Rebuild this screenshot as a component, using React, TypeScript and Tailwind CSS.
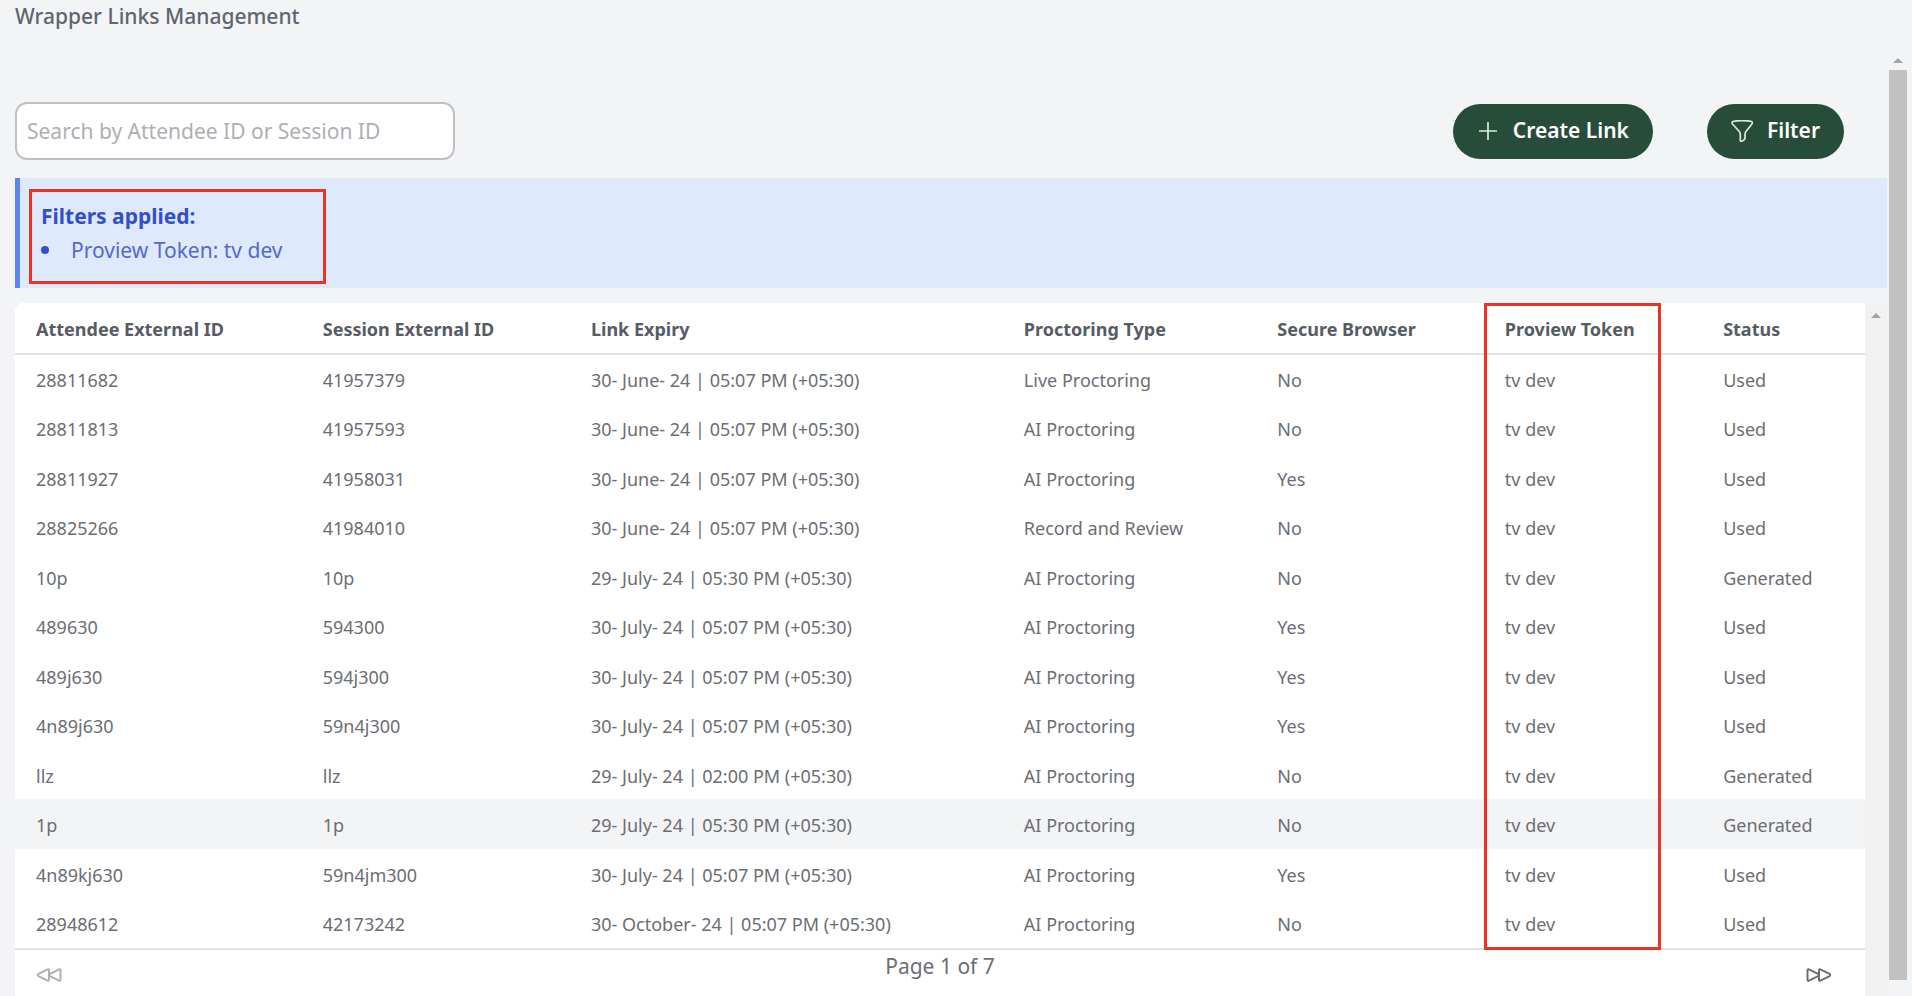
import type { ReactNode } from "react";

type Link = {
  attendee: string;
  session: string;
  expiry: string;
  type: string;
  secure: string;
  token: string;
  status: string;
};

const JUNE = "30- June- 24 | 05:07 PM (+05:30)";
const JULY = "30- July- 24 | 05:07 PM (+05:30)";

const LINKS: Link[] = [
  { attendee: "28811682", session: "41957379", expiry: JUNE, type: "Live Proctoring", secure: "No", token: "tv dev", status: "Used" },
  { attendee: "28811813", session: "41957593", expiry: JUNE, type: "AI Proctoring", secure: "No", token: "tv dev", status: "Used" },
  { attendee: "28811927", session: "41958031", expiry: JUNE, type: "AI Proctoring", secure: "Yes", token: "tv dev", status: "Used" },
  { attendee: "28825266", session: "41984010", expiry: JUNE, type: "Record and Review", secure: "No", token: "tv dev", status: "Used" },
  { attendee: "10p", session: "10p", expiry: "29- July- 24 | 05:30 PM (+05:30)", type: "AI Proctoring", secure: "No", token: "tv dev", status: "Generated" },
  { attendee: "489630", session: "594300", expiry: JULY, type: "AI Proctoring", secure: "Yes", token: "tv dev", status: "Used" },
  { attendee: "489j630", session: "594j300", expiry: JULY, type: "AI Proctoring", secure: "Yes", token: "tv dev", status: "Used" },
  { attendee: "4n89j630", session: "59n4j300", expiry: JULY, type: "AI Proctoring", secure: "Yes", token: "tv dev", status: "Used" },
  { attendee: "llz", session: "llz", expiry: "29- July- 24 | 02:00 PM (+05:30)", type: "AI Proctoring", secure: "No", token: "tv dev", status: "Generated" },
  { attendee: "1p", session: "1p", expiry: "29- July- 24 | 05:30 PM (+05:30)", type: "AI Proctoring", secure: "No", token: "tv dev", status: "Generated" },
  { attendee: "4n89kj630", session: "59n4jm300", expiry: JULY, type: "AI Proctoring", secure: "Yes", token: "tv dev", status: "Used" },
  { attendee: "28948612", session: "42173242", expiry: "30- October- 24 | 05:07 PM (+05:30)", type: "AI Proctoring", secure: "No", token: "tv dev", status: "Used" },
];

const COLUMNS = [
  { key: "attendee", label: "Attendee External ID", width: "w-[15.5%]" },
  { key: "session", label: "Session External ID", width: "w-[14.5%]" },
  { key: "expiry", label: "Link Expiry", width: "w-[23.4%]" },
  { key: "type", label: "Proctoring Type", width: "w-[13.7%]" },
  { key: "secure", label: "Secure Browser", width: "w-[12.3%]" },
  { key: "token", label: "Proview Token", width: "w-[11.8%]" },
  { key: "status", label: "Status", width: "w-[8.8%]" },
] as const;

const ACTIVE = "1p";

export default function App() {
  return (
    <div className="min-h-screen flex flex-col bg-[#f3f4f6] text-[#6b6e74] font-['Noto_Sans','Open_Sans',sans-serif]">
      <header className="h-12 pl-[15px]">
        <h1 className="text-[21px] leading-8 font-medium text-[#5f656d]">Wrapper Links Management</h1>
      </header>

      <div className="flex-1 flex">
        <main className="flex-1 min-w-0 flex flex-col pl-[15px]">
          <Toolbar />
          <FilterNotice />
          <div className="flex-1 flex mt-[15px]">
            <section className="flex-1 min-w-0 flex flex-col bg-white rounded-tl-lg">
              <LinksTable />
              <Pager />
            </section>
            <div className="w-[22px] pt-2.5 flex justify-center bg-[#f1f1f1]">
              <ArrowUp />
            </div>
          </div>
        </main>

        <div className="w-[25px] pt-2.5 pb-4 pl-0.5 pr-[5px] flex flex-col items-center gap-[7px]">
          <ArrowUp />
          <div className="flex-1 w-full bg-[#c1c1c1]" />
        </div>
      </div>
    </div>
  );
}

function Toolbar() {
  return (
    <div className="flex items-center justify-between pt-[54px] pr-[43px]">
      <input
        type="text"
        aria-label="Search by Attendee ID or Session ID"
        placeholder="Search by Attendee ID or Session ID"
        className="w-[440px] h-[58px] px-2.5 rounded-xl border-2 border-[#bfc0c5] bg-white text-[21px] placeholder:text-[#adafb5]"
      />
      <div className="flex gap-[54px]">
        <PillButton label="Create Link">
          <path d="M11 2v18M2 11h18" />
        </PillButton>
        <PillButton label="Filter">
          <path d="M2 1.5C7 .3 16 .3 20.500 1.500c1 .3 1.200 1.500.4 2.500L15 11.500c-.8 1-1 2-1 3v3.500c0 .8-.3 1.300-1 1.800l-1.800 1.400c-.9.600-1.900.1-1.900-1v-5.700c0-1.200-.4-2.200-1.200-3.200L1.500 4C.800 3 1 1.800 2 1.500z" />
        </PillButton>
      </div>
    </div>
  );
}

function PillButton({ label, children }: { label: string; children: ReactNode }) {
  return (
    <button className="h-[55px] px-6 flex items-center gap-3.5 rounded-full bg-[#274d3a] text-white text-[21px] font-semibold">
      <svg viewBox="0 0 22 22" className="w-[22px] h-[22px]" fill="none" stroke="#dbe8e0" strokeWidth="1.7" strokeLinejoin="round">
        {children}
      </svg>
      {label}
    </button>
  );
}

function FilterNotice() {
  return (
    <div className="mt-[18px] h-[110px] pl-[9px] pt-[11px] border-l-[5px] border-[#5b84ee] bg-[#deeafb]">
      <div className="w-[297px] h-[95px] pl-[9px] pt-2 border-3 border-[#ea3323] text-[21px]">
        <p className="leading-8 font-bold text-[#3450c8]">Filters applied:</p>
        <ul className="leading-9 text-[#5668d0]">
          <li className="flex items-center gap-[22px]">
            <span className="w-2 h-2 rounded-full bg-[#3450c8]" />
            Proview Token: tv dev
          </li>
        </ul>
      </div>
    </div>
  );
}

function LinksTable() {
  return (
    <div className="relative">
      <table className="w-full table-fixed border-collapse text-lg text-left">
        <thead>
          <tr className="h-[51px] border-b-2 border-[#dfe2e7]">
            {COLUMNS.map((c) => (
              <th key={c.key} className={`${c.width} pl-[21px] pt-0.5 font-bold text-[#565b64]`}>{c.label}</th>
            ))}
          </tr>
        </thead>
        <tbody>
          {LINKS.map((link) => (
            <tr key={link.attendee} className={`odd:h-[49px] even:h-[50px] ${link.attendee === ACTIVE ? "bg-[#f3f4f6]" : ""}`}>
              {COLUMNS.map((c) => (
                <td key={c.key} className="pl-[21px] pt-0.5 whitespace-nowrap">{link[c.key]}</td>
              ))}
            </tr>
          ))}
        </tbody>
      </table>
      {/* highlight round the token column */}
      <div className="absolute top-0 -bottom-0.5 left-[79.4%] w-[177px] border-3 border-[#ea3323] pointer-events-none" />
    </div>
  );
}

function Pager() {
  return (
    <nav className="flex-1 grid grid-cols-3 items-start border-t-2 border-[#dfe2e7]">
      <button aria-label="First page" className="justify-self-start pt-[18px] pl-[21px] text-[#b0b0b4]">
        <DoubleTriangle className="rotate-180" />
      </button>
      <p className="text-center text-[21px] leading-8">Page 1 of 7</p>
      <button aria-label="Last page" className="justify-self-end pt-[18px] pr-[33px] text-[#6b6e74]">
        <DoubleTriangle />
      </button>
    </nav>
  );
}

function DoubleTriangle({ className = "" }: { className?: string }) {
  return (
    <svg viewBox="0 0 26 14" className={`w-[26px] h-3.5 ${className}`} fill="none" stroke="currentColor" strokeWidth="2" strokeLinejoin="round">
      <path d="M1.500 2.200c0-.8.700-1.200 1.400-.8l9.200 4.500c.8.400.8 1.800 0 2.200l-9.200 4.500c-.7.400-1.400 0-1.400-.8zM13 2.200c0-.8.700-1.200 1.400-.8l9.200 4.500c.8.400.8 1.800 0 2.200l-9.200 4.500c-.7.400-1.400 0-1.400-.8z" />
    </svg>
  );
}

function ArrowUp() {
  return (
    <svg viewBox="0 0 10 5" className="w-2.5 h-[5px]" fill="#a3a3a3">
      <path d="M5 0l5 5H0z" />
    </svg>
  );
}
